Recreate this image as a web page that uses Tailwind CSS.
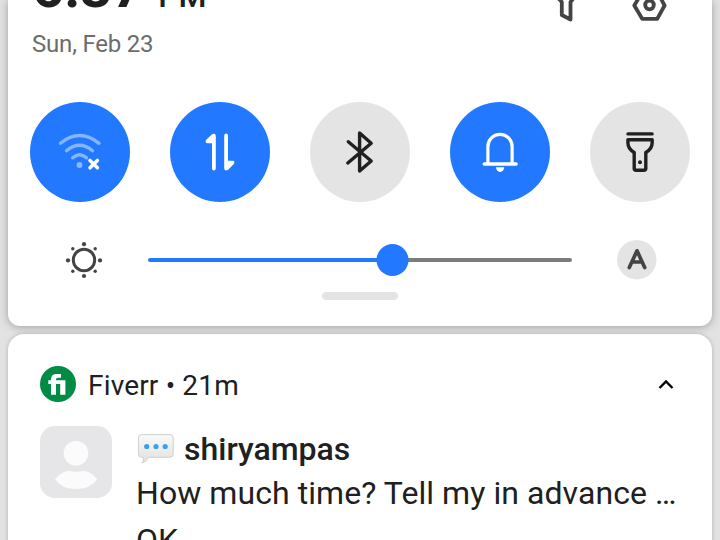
<!DOCTYPE html>
<html lang="en">
<head>
<meta charset="utf-8">
<title>Notification shade</title>
<script src="https://cdn.jsdelivr.net/npm/@tailwindcss/browser@4"></script>
</head>
<body class="h-[540px] w-[720px] overflow-hidden bg-[#e2e2e2] font-[Roboto,sans-serif] text-[#202020]">
<main class="flex h-[540px] flex-col gap-2 overflow-hidden px-2">
  <section class="relative z-10 flex h-[326px] shrink-0 flex-col rounded-b-xl bg-white shadow-[0_1px_8px_rgba(0,0,0,0.3)]">
    <header class="flex h-[62px] justify-between pl-6">
      <div class="flex flex-col">
        <div class="flex h-[30px] items-end overflow-hidden whitespace-nowrap">
          <div class="mb-[6px] flex items-baseline gap-[14px] leading-[56px]">
            <span class="text-[56px] font-bold">6:37</span><span class="text-[32px] font-medium">PM</span>
          </div>
        </div>
        <p class="text-2xl leading-7 tracking-[-0.2px] text-[#6c6c6c]">Sun, Feb 23</p>
      </div>
      <div class="flex gap-[46px] pr-[44px]">
        <svg class="h-[26px] w-[36px]" viewBox="550 0 36 26" fill="none" stroke="#444" stroke-width="3.8" stroke-linejoin="round"><path d="M550-12H582L572.5 -.5 570.5 2V19.5L561.8 15V2L559.5 -.5Z"/></svg>
        <svg class="h-[26px] w-[36px]" viewBox="632 0 36 26" fill="none" stroke="#444" stroke-width="3.8" stroke-linejoin="round"><path d="M634.3 5.5L642.2-8H657.4L664.6 5.5 657.2 18.8H642.2Z"/><circle cx="649.5" cy="5" r="4.3"/></svg>
      </div>
    </header>
    <div class="mt-10 flex justify-between px-[22px]">
      <div class="size-[100px] rounded-full bg-[#2279ff]">
        <svg viewBox="0 0 100 100" fill="none" stroke-linecap="round"><g stroke="#fff" stroke-opacity=".45" stroke-width="3.4"><path d="M30.5 41.3Q49.5 25.9 69 41.3M36.5 48.7Q49.5 37.9 62.5 48.7M42.7 55.8Q49.5 49.7 56.5 55.8"/></g><circle cx="49.5" cy="63" r="2.9" fill="#fff" fill-opacity=".48"/><path d="M60 58.4L67.4 65.8M67.4 58.4L60 65.8" stroke="#fff" stroke-width="3.5"/></svg>
      </div>
      <div class="size-[100px] rounded-full bg-[#2279ff]">
        <svg viewBox="0 0 100 100" fill="#fff"><path d="M42.4 31.9Q45.8 31 45.8 34V66.5A1.9 1.9 0 0 1 42 66.5V41.3H37Q34.4 40.2 36.5 37.6ZM54.2 33.5A1.9 1.9 0 0 1 58 33.5V58.8H63Q65.5 59.6 63.6 62.2L58.2 67.8Q54.2 69.8 54.2 66Z"/></svg>
      </div>
      <div class="size-[100px] rounded-full bg-[#e4e4e4]">
        <svg viewBox="0 0 100 100" fill="none" stroke="#202020" stroke-width="3.4" stroke-linecap="round" stroke-linejoin="round"><path d="M38.3 39.7L61.2 59 49.6 69V31L61.2 41.2 37.8 61"/></svg>
      </div>
      <div class="size-[100px] rounded-full bg-[#2279ff]">
        <svg viewBox="0 0 100 100" fill="none" stroke="#fff" stroke-width="3.2" stroke-linecap="round"><path d="M37.9 61V44.5A12.1 12.1 0 0 1 62.1 44.5V61"/><path d="M34.3 62H66" stroke-width="3.6"/><path d="M46 65.3H54.2A4.1 4.7 0 0 1 46 65.3Z" fill="#fff" stroke="none"/></svg>
      </div>
      <div class="size-[100px] rounded-full bg-[#e4e4e4]">
        <svg viewBox="0 0 100 100" fill="none" stroke="#202020" stroke-width="3.4" stroke-linecap="round" stroke-linejoin="round"><path d="M38 31.9H62.1"/><path d="M37.9 37.8H62.2V40.5Q62.2 47 55.8 50.5V66.2Q55.8 68.3 53.7 68.3H46.3Q44.2 68.3 44.2 66.2V50.5Q37.9 47 37.9 40.5Z"/><circle cx="50" cy="60.2" r="2" fill="#202020" stroke="none"/></svg>
      </div>
    </div>
    <div class="mt-9 flex h-11 items-center">
      <svg class="ml-[56px] size-10 shrink-0" viewBox="0 0 40 40" fill="#444"><circle cx="20" cy="20" r="10.7" fill="none" stroke="#444" stroke-width="3"/><circle cx="20" cy="4.2" r="2.1"/><circle cx="20" cy="36" r="2.1"/><circle cx="4" cy="20.4" r="2.1"/><circle cx="36" cy="20.4" r="2.1"/><circle cx="8.8" cy="8.8" r="1.7"/><circle cx="31.2" cy="8.8" r="1.7"/><circle cx="8.8" cy="31.2" r="1.7"/><circle cx="31.2" cy="31.2" r="1.7"/></svg>
      <div class="ml-[43.5px] flex w-[424.5px] items-center">
        <div class="h-1 w-[231px] rounded-l-full bg-[#2279ff]"></div>
        <div class="-ml-[2px] size-8 shrink-0 -translate-x-[0.5px] rounded-full bg-[#2279ff]"></div>
        <div class="-ml-px h-1 flex-1 rounded-r-full bg-[#7c7c7c]"></div>
      </div>
      <svg class="ml-[44.5px] size-10 shrink-0" viewBox="0 0 40 40"><circle cx="19.8" cy="19.8" r="19.7" fill="#e4e4e4"/><path d="M12.3 27.5L20 10.8 27.7 27.5M15.5 22H25" fill="none" stroke="#444" stroke-width="3.7" stroke-linecap="round" stroke-linejoin="round"/></svg>
    </div>
    <div class="mx-auto mt-[10px] h-2 w-[76px] rounded-full bg-[#e4e4e4]"></div>
  </section>
  <article class="flex h-[260px] shrink-0 flex-col rounded-t-2xl bg-white px-8 pt-8 shadow-[0_0_4px_rgba(0,0,0,0.22)]">
    <div class="flex h-9 items-center">
      <svg class="size-9" viewBox="0 0 36 36"><circle cx="18" cy="18" r="18" fill="#008c45"/><path d="M8.3 14.2H11V13.2Q11 8 16.6 8H21V11.7H18.2Q16 11.7 16 13.6V14.2H25.4V28.8H20.2V17.9H16V28.8H11V17.9H8.3Z" fill="#fff"/></svg>
      <span class="ml-3 pt-[3px] text-[28px] leading-9 tracking-[0.17px]">Fiverr • 21m</span>
      <svg class="mr-[6px] ml-auto h-3 w-4" viewBox="0 -1 16 12" fill="none" stroke="#000" stroke-width="2.4"><path d="M1.5 9L8 2.5 14.5 9"/></svg>
    </div>
    <div class="mt-6 flex">
      <svg class="size-[72px] shrink-0" viewBox="0 0 72 72"><rect width="72" height="72" rx="15" fill="#e6e6e8"/><g fill="#fbfbfb"><circle cx="36" cy="27.2" r="12.3"/><path d="M15 53.2Q22 44.8 29.5 45Q36 46.5 43 45Q50.5 44.8 57.2 53.2Q50 63 36 63Q22 63 15 53.2Z"/></g></svg>
      <div class="ml-6 pt-px whitespace-nowrap">
        <div class="flex h-11 items-center">
          <svg class="h-9 w-[38px]" viewBox="0 0 38 36"><defs><linearGradient id="bubble" x2="0" y2="1"><stop stop-color="#fafafa"/><stop offset="1" stop-color="#e0e0e0"/></linearGradient></defs><path d="M5.6 3.6H34Q37.2 3.6 37.2 6.8V23Q37.2 26.3 34 26.3H12.5Q10 31.5 5.9 31.8Q8 30 7.5 26.3H5.6Q2.4 26.3 2.4 23V6.8Q2.4 3.6 5.6 3.6Z" fill="url(#bubble)" stroke="#ccc" stroke-width=".9"/><g fill="#39a0ed"><circle cx="10.7" cy="15.5" r="2.6"/><circle cx="20" cy="15.5" r="2.6"/><circle cx="29.2" cy="15.5" r="2.6"/></g></svg>
          <span class="ml-[10px] text-[32px] font-medium leading-[44px]">shiryampas</span>
        </div>
        <p class="-mt-px text-[32px] leading-[47px] tracking-[0.065px]">How much time? Tell my in advance …<br>OK</p>
      </div>
    </div>
  </article>
</main>
</body>
</html>
